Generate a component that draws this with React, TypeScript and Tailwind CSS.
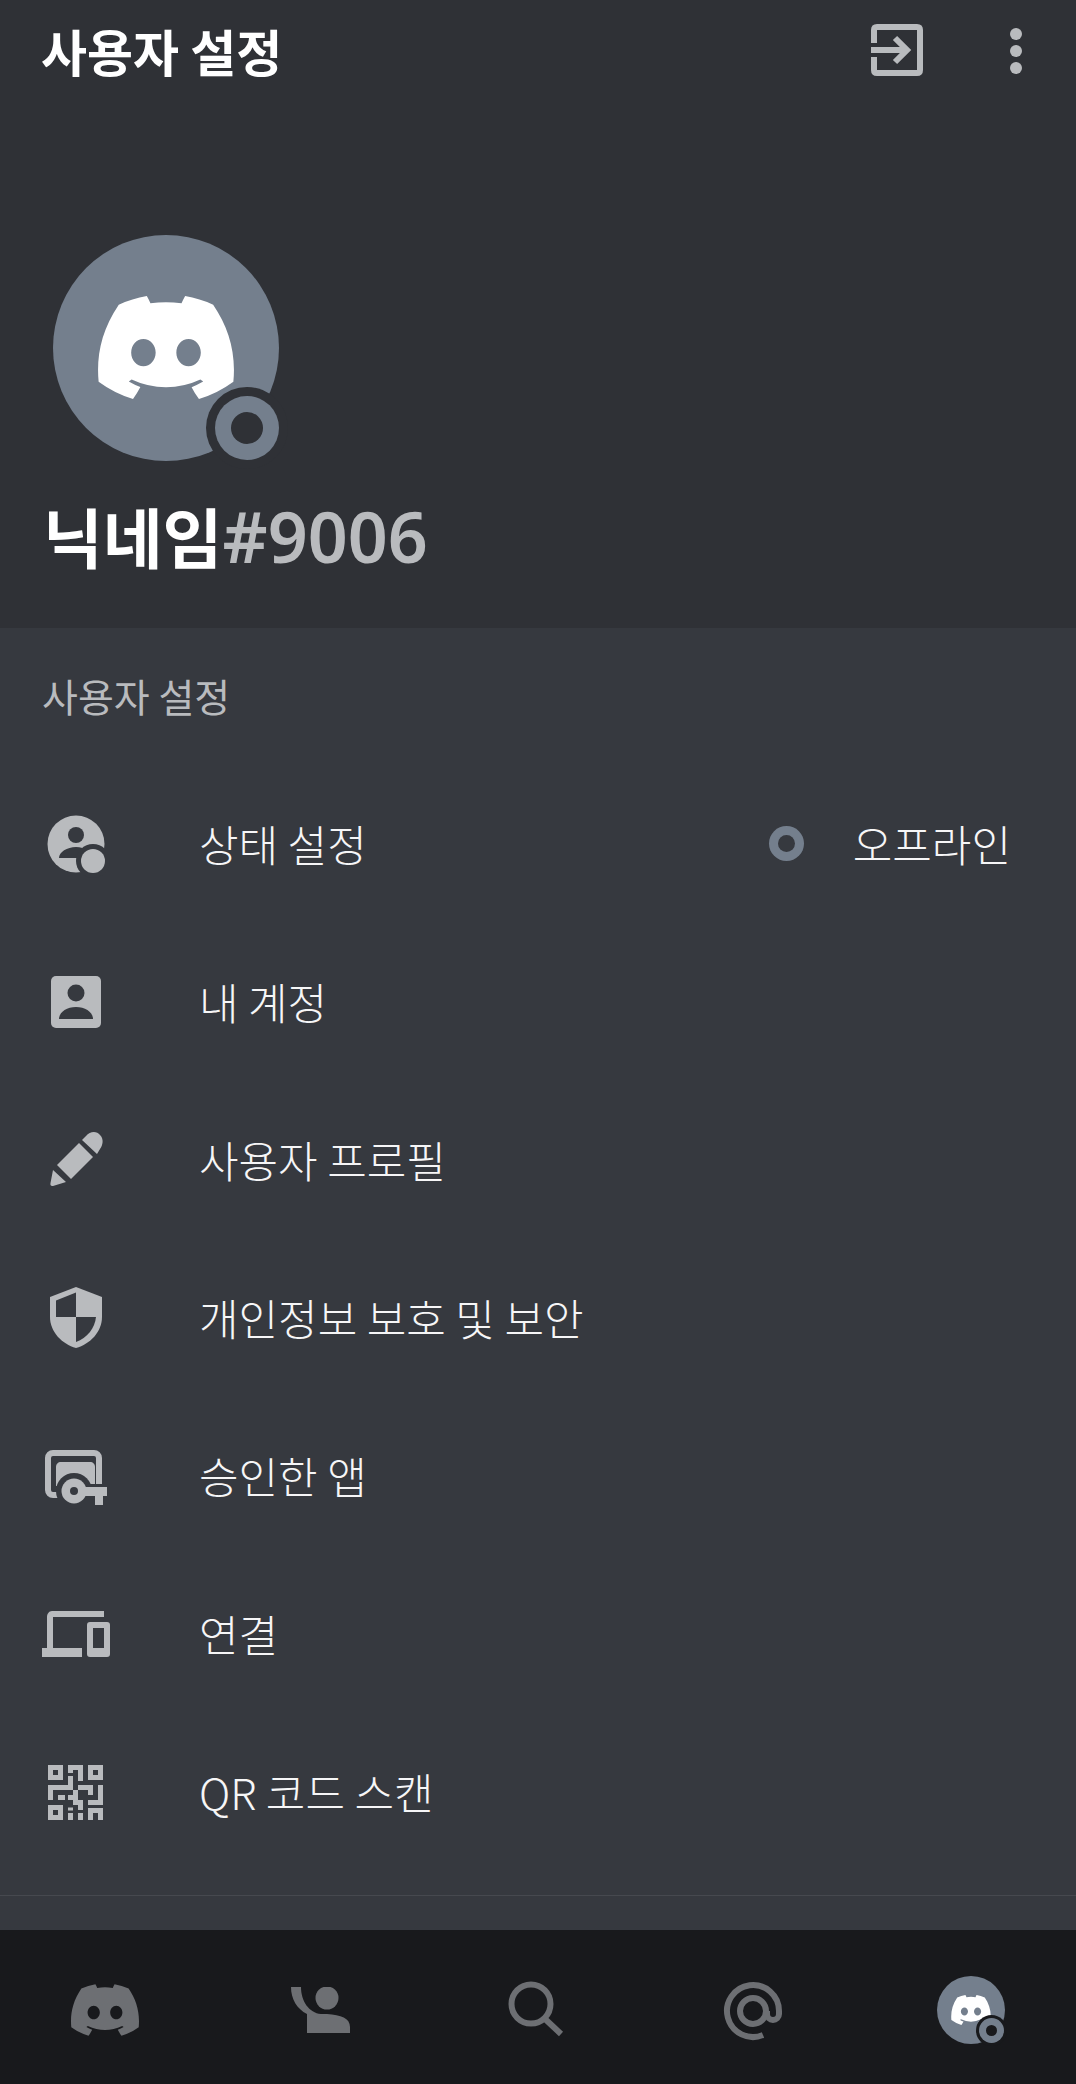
import type { ReactNode } from "react";

const DISCORD_PATH =
  "M107.7,8.07A105.15,105.15,0,0,0,81.47,0a72.06,72.06,0,0,0-3.36,6.83A97.68,97.68,0,0,0,49,6.83,72.37,72.37,0,0,0,45.64,0,105.89,105.89,0,0,0,19.39,8.09C2.79,32.65-1.71,56.6.54,80.21h0A105.73,105.73,0,0,0,32.71,96.36,77.7,77.7,0,0,0,39.6,85.25a68.42,68.42,0,0,1-10.85-5.18c.91-.66,1.8-1.34,2.66-2a75.57,75.57,0,0,0,64.32,0c.87.71,1.76,1.39,2.66,2a68.68,68.68,0,0,1-10.87,5.19,77,77,0,0,0,6.89,11.1A105.25,105.25,0,0,0,126.6,80.22h0C129.24,52.84,122.09,29.11,107.7,8.07ZM42.45,65.69C36.18,65.69,31,60,31,53s5-12.74,11.43-12.74S54,46,53.89,53,48.84,65.69,42.45,65.69Zm42.24,0C78.41,65.69,73.25,60,73.25,53s5-12.74,11.44-12.74S96.23,46,96.12,53,91.08,65.69,84.69,65.69Z";

const BG = "#36393f";

function DiscordLogo({ className }: { className: string }) {
  return (
    <svg viewBox="0 0 127.14 96.36" className={className} fill="currentColor">
      <path d={DISCORD_PATH} />
    </svg>
  );
}

function IconBox({ children }: { children: ReactNode }) {
  return (
    <svg viewBox="0 0 72 72" className="w-[72px] h-[72px] shrink-0" fill="#b9bbbe">
      {children}
    </svg>
  );
}

function StatusIcon() {
  return (
    <IconBox>
      <circle cx="36" cy="37" r="28.5" />
      <circle cx="36" cy="28" r="8" fill={BG} />
      <path d="M19 51c0-6 8-11 17-11s17 5 17 11z" fill={BG} />
      <circle cx="53" cy="54" r="17" fill={BG} />
      <circle cx="53" cy="54" r="12" />
    </IconBox>
  );
}

function AccountIcon() {
  return (
    <IconBox>
      <rect x="11" y="11" width="50" height="52" rx="5" />
      <circle cx="36" cy="28" r="8.5" fill={BG} />
      <path d="M19 54c0-7 8-12 17-12s17 5 17 12z" fill={BG} />
    </IconBox>
  );
}

function PencilIcon() {
  return (
    <IconBox>
      <path d="M13 47L26 59L13 63C11 63.500 10 62 10.500 60Z" />
      <path d="M17 42L39 20L53 34L31 56Z" />
      <path d="M42 17L46 13C50 8 57 8 60 12C64 16 63 22 60 26L57 31Z" />
    </IconBox>
  );
}

function ShieldIcon() {
  return (
    <IconBox>
      <path d="M36 6L62 16V36C62 51 50 63 36 67C22 63 10 51 10 36V16Z" />
      <path d="M36 11.500L16 19.500V36H36Z" fill={BG} />
      <path d="M36 36H56C55 47 47 57 36 61Z" fill={BG} />
    </IconBox>
  );
}

function AppKeyIcon() {
  return (
    <IconBox>
      <rect x="8" y="14" width="51" height="42" rx="5" fill="none" stroke="#b9bbbe" strokeWidth="6" />
      <path d="M16 28C16 25 18 23 21 23H50C53 23 55 25 55 28V47H16Z" />
      <circle cx="34" cy="52" r="18" fill={BG} />
      <rect x="42" y="45" width="30" height="26" fill={BG} />
      <circle cx="34" cy="52" r="12.500" />
      <circle cx="34" cy="52" r="4" fill={BG} />
      <rect x="40" y="48" width="27" height="9" />
      <rect x="55" y="48" width="8" height="18" />
    </IconBox>
  );
}

function DevicesIcon() {
  return (
    <IconBox>
      <path d="M64 14V20H13V51H42V60H2V51H7V20C7 17 9 14 12 14Z" />
      <path
        fillRule="evenodd"
        d="M50 25H67C69 25 70 26 70 28V57C70 59 69 60 67 60H50C48 60 47 59 47 57V28C47 26 48 25 50 25ZM53 31V51H64V31Z"
      />
    </IconBox>
  );
}

// cells of the qr glyph, [col, row, w, h] on an 11x11 grid
const qrCells = [
  [4, 0, 3, 1],
  [4, 1, 1, 0.6],
  [6, 1, 1, 2.2],
  [4, 2.2, 1, 2.8],
  [0, 4, 5, 1],
  [0, 5, 1, 2],
  [2, 6, 1.4, 1],
  [6, 4, 3, 1],
  [8, 5, 1, 1],
  [5, 5, 1, 1],
  [4, 6, 2, 1],
  [5, 7, 2, 1],
  [6, 8, 1, 1],
  [4, 8.5, 1, 0.6],
  [4, 9.6, 1, 1.4],
  [6, 9.6, 1, 1.4],
  [10, 4, 1, 4],
  [8, 7, 3, 1],
  [8, 8.6, 3, 1],
  [8, 9.6, 1, 1.4],
  [10, 9.6, 1, 1.4],
];

function QrIcon() {
  const finders = [
    [8, 10],
    [48, 10],
    [8, 50],
  ];
  return (
    <IconBox>
      {finders.map(([x, y]) => (
        <path key={`${x}-${y}`} fillRule="evenodd" d={`M${x} ${y}h15v15h-15zM${x + 5} ${y + 5}v5h5v-5z`} />
      ))}
      {qrCells.map(([c, r, w, h]) => (
        <rect key={`${c}-${r}`} x={8 + c * 5} y={10 + r * 5} width={w * 5} height={h * 5} />
      ))}
    </IconBox>
  );
}

const rows = [
  { label: "상태 설정", icon: <StatusIcon />, status: true },
  { label: "내 계정", icon: <AccountIcon /> },
  { label: "사용자 프로필", icon: <PencilIcon /> },
  { label: "개인정보 보호 및 보안", icon: <ShieldIcon /> },
  { label: "승인한 앱", icon: <AppKeyIcon /> },
  { label: "연결", icon: <DevicesIcon /> },
  { label: "QR 코드 스캔", icon: <QrIcon /> },
];

export default function App() {
  return (
    <div className="w-[1076px] h-[2084px] flex flex-col overflow-hidden bg-[#36393f] font-['Noto_Sans_CJK_KR','Noto_Sans',sans-serif]">
      {/* Header */}
      <header className="h-[628px] shrink-0 bg-[#2f3136]">
        <div className="h-[100px] flex items-center pl-[41px]">
          <h1 className="text-[50px] leading-none font-bold text-white">사용자 설정</h1>
          <svg viewBox="0 0 52 52" className="w-[52px] h-[52px] ml-auto" fill="none" stroke="#b9bbbe" strokeWidth="6">
            <path d="M3 19V6C3 4 4 3 6 3H46C48 3 49 4 49 6V46C49 48 48 49 46 49H6C4 49 3 48 3 46V33" />
            <path d="M0 26H35" />
            <path d="M24 14L36 26L24 38" />
          </svg>
          <svg viewBox="0 0 12 46" className="w-[12px] h-[46px] mt-[2px] ml-[87px] mr-[54px]" fill="#b9bbbe">
            <circle cx="6" cy="6" r="6" />
            <circle cx="6" cy="23" r="6" />
            <circle cx="6" cy="40" r="6" />
          </svg>
        </div>

        <div className="relative w-[226px] h-[226px] ml-[53px] mt-[135px] rounded-full bg-[#747f8d] flex items-center justify-center">
          <DiscordLogo className="w-[136px] h-[103px] text-white -mt-[2px]" />
          <div className="absolute left-[153px] top-[152px] w-[82px] h-[82px] rounded-full bg-[#2f3136] flex items-center justify-center">
            <div className="w-[64px] h-[64px] rounded-full bg-[#747f8d] flex items-center justify-center">
              <div className="w-[32px] h-[32px] rounded-full bg-[#2f3136]" />
            </div>
          </div>
        </div>

        <div className="mt-[28px] pl-[43px] text-[65px] leading-[92px] font-bold text-white whitespace-nowrap">
          닉네임
          <span className="text-[70px] font-['Noto_Sans',sans-serif] font-semibold text-[#b9bbbe]">#9006</span>
        </div>
      </header>

      {/* Settings list */}
      <main className="flex-1 flex flex-col">
        <h2 className="pl-[42px] mt-[44px] text-[39px] leading-[46px] font-normal text-[#b9bbbe]">사용자 설정</h2>
        <ul className="mt-[46px]">
          {rows.map((row) => (
            <li key={row.label} className="h-[158px] flex items-center pl-[40px] pr-[65px]">
              {row.icon}
              <span className="ml-[87px] text-[43px] leading-none font-light text-[#f6f6f7]">{row.label}</span>
              {row.status && (
                <div className="ml-auto flex items-center">
                  <div className="w-[35px] h-[35px] rounded-full bg-[#747f8d] flex items-center justify-center">
                    <div className="w-[17px] h-[17px] rounded-full bg-[#36393f]" />
                  </div>
                  <span className="ml-[49px] text-[43px] leading-none font-light text-[#f6f6f7]">오프라인</span>
                </div>
              )}
            </li>
          ))}
        </ul>
        <div className="h-px mt-[25px] bg-[#46494f]" />
      </main>

      {/* Bottom tabs */}
      <nav className="h-[154px] shrink-0 bg-[#18191c] grid grid-cols-5 items-center justify-items-center text-[#6d6f73]">
        <DiscordLogo className="w-[68px] h-[52px] mt-[5px] -ml-[5px]" />
        <svg viewBox="0 0 59 46" className="w-[59px] h-[46px] mt-[6px] -ml-[4px]" fill="currentColor">
          <circle cx="36" cy="11" r="11.500" />
          <path d="M0 0H10C10 14 18 26 30 27H36C50 28 59 31 59 40V46H16V27C6 22 0 12 0 0Z" />
        </svg>
        <svg viewBox="0 0 60 60" className="w-[60px] h-[60px] mt-[6px] -ml-[4px]" fill="none" stroke="currentColor" strokeWidth="6">
          <circle cx="25" cy="24" r="19.500" />
          <path d="M38 38L55 54" />
        </svg>
        <svg viewBox="0 0 60 60" className="w-[60px] h-[60px] mt-[8px]" fill="none" stroke="currentColor" strokeWidth="6">
          <path d="M40 54A26 26 0 1 1 56 30V33A6 6 0 0 1 44 33V30" />
          <circle cx="30" cy="30" r="13" />
        </svg>
        <div className="relative w-[68px] h-[68px] mt-[5px] ml-[5px] rounded-full bg-[#747f8d] flex items-center justify-center">
          <DiscordLogo className="w-[40px] h-[30px] text-white" />
          <div className="absolute left-[39px] top-[39px] w-[31px] h-[31px] rounded-full bg-[#18191c] flex items-center justify-center">
            <div className="w-[25px] h-[25px] rounded-full bg-[#747f8d] flex items-center justify-center">
              <div className="w-[11px] h-[11px] rounded-full bg-[#18191c]" />
            </div>
          </div>
        </div>
      </nav>
    </div>
  );
}
